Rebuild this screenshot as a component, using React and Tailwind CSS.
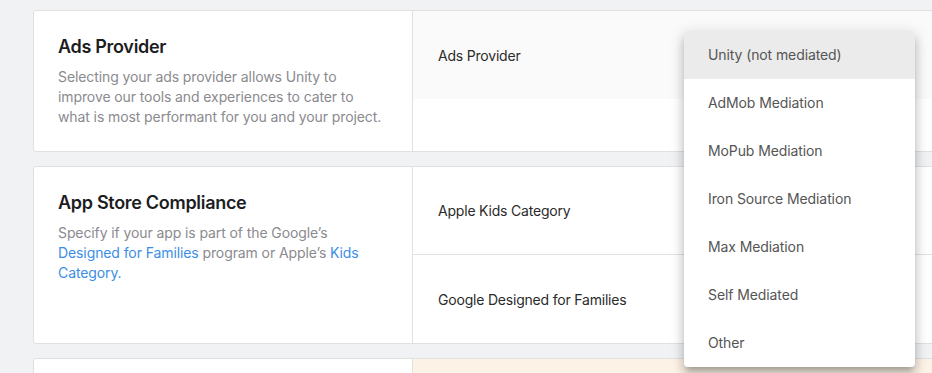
import React from "react";

const font = { fontFamily: "Inter, 'Noto Sans', sans-serif" };

function Row({ label, shaded, last }) {
  return (
    <div
      className={`h-[88px] flex items-center pl-[25px] text-[14px] tracking-[-0.2px] text-[#2b2b2b] ${
        shaded ? "bg-[#fafafa]" : "bg-white"
      } ${last ? "" : "border-b border-[#e2e2e2]"}`}
    >
      {label}
    </div>
  );
}

function Card({ title, children, right, rightClass = "" }) {
  return (
    <div className="flex w-[960px] bg-white border border-[#e0e0e0] rounded-[3px]">
      <div className="w-[379px] shrink-0 border-r border-[#e0e0e0] px-6 pt-6 pb-6">
        <div className="text-[18px] leading-6 font-semibold tracking-[-0.3px] text-[#1d1d1f]">{title}</div>
        <div className="mt-2 max-w-[328px] text-[14px] leading-5 tracking-[-0.1px] text-[#8a8a8f]">{children}</div>
      </div>
      <div className={`flex-1 flex flex-col ${rightClass}`}>{right}</div>
    </div>
  );
}

const items = [
  "Unity (not mediated)",
  "AdMob Mediation",
  "MoPub Mediation",
  "Iron Source Mediation",
  "Max Mediation",
  "Self Mediated",
  "Other",
];

export default function App() {
  return (
    <div
      className="relative w-[932px] h-[373px] overflow-hidden bg-[#f1f2f4]"
      style={font}
    >
      <div className="flex flex-col gap-[14px] pl-[33px] pt-[10px]">
        <Card
          title="Ads Provider"
          right={<Row label="Ads Provider" shaded last />}
        >
          Selecting your ads provider allows Unity to improve our tools and
          experiences to cater to what is most performant for you and your
          project.
        </Card>
        <Card
          title="App Store Compliance"
          right={
            <>
              <Row label="Apple Kids Category" />
              <Row label="Google Designed for Families" last />
            </>
          }
        >
          Specify if your app is part of the Google’s{" "}
          <span className="text-[#3b8de6]">Designed for Families</span> program
          or Apple’s <span className="text-[#3b8de6]">Kids Category.</span>
        </Card>
        <div className="flex w-[960px] h-[120px] bg-white border border-[#e0e0e0] rounded-[3px]">
          <div className="w-[379px] shrink-0 border-r border-[#e0e0e0]" />
          <div className="flex-1 bg-[#fcf3e6]" />
        </div>
      </div>

      <div className="absolute left-[684px] top-[31px] w-[231px] bg-white rounded-[4px] shadow-[0_5px_5px_-3px_rgba(0,0,0,0.2),0_8px_10px_1px_rgba(0,0,0,0.14),0_3px_14px_2px_rgba(0,0,0,0.12)] overflow-hidden">
        {items.map((it, i) => (
          <div
            key={it}
            className={`h-[48px] flex items-center pl-6 pb-[1px] text-[14px] tracking-[-0.1px] text-[#555555] ${
              i === 0 ? "bg-[#ebebeb]" : ""
            }`}
          >
            {it}
          </div>
        ))}
      </div>
    </div>
  );
}
